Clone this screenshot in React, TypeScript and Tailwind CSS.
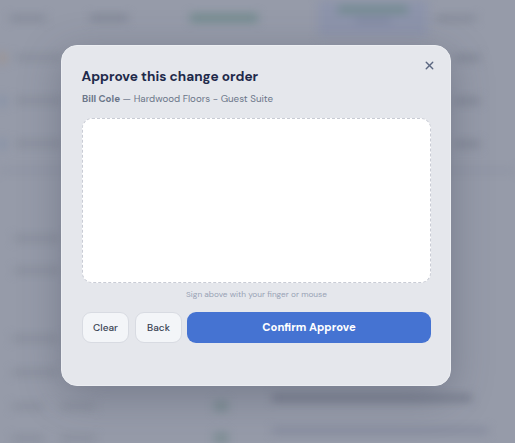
import { X } from 'lucide-react'

const font = "font-['DM_Sans','Inter','Liberation_Sans',sans-serif]"

function Bar({ className }: { className: string }) {
  return <div className={className} />
}

function BackdropPage() {
  return (
    <div className="flex h-full flex-col blur-[5px]">
      {/* top tabs */}
      <div className="flex h-[36px] shrink-0 items-center">
        <Bar className="ml-[10px] h-[5px] w-[36px] bg-[#7f8594]" />
        <Bar className="ml-[44px] h-[6px] w-[38px] bg-[#7f8594]" />
        <Bar className="ml-[62px] h-[8px] w-[68px] bg-[#6f8a8c]" />
        <div className="ml-[60px] flex h-full w-[110px] flex-col items-center bg-[#8d94ab] pt-[6px]">
          <Bar className="h-[7px] w-[70px] bg-[#6f8a8c]" />
          <Bar className="mt-[5px] h-[5px] w-[36px] bg-[#7f87a0]" />
        </div>
        <Bar className="ml-[8px] h-[5px] w-[40px] bg-[#7f8594]" />
      </div>

      {/* rows */}
      {['bg-[#a08f85]', 'bg-[#7d8ca6]', 'bg-[#7d8ca6]'].map((dot, i) => (
        <div key={i} className="flex h-[43px] shrink-0 items-center">
          <Bar className={`h-[10px] w-[5px] ${dot}`} />
          <Bar className="ml-[10px] h-[5px] w-[48px] bg-[#858b99]" />
          <div className="flex-1" />
          <Bar className="mr-[35px] h-[6px] w-[26px] bg-[#7f8594]" />
        </div>
      ))}
      <Bar className="mt-[4px] h-[3px] w-full shrink-0 bg-[#8a90a0]" />

      {/* lower lists */}
      <div className="mt-[64px] flex flex-col gap-[27px] pl-[14px]">
        <Bar className="h-[5px] w-[46px] bg-[#858b99]" />
        <Bar className="h-[5px] w-[46px] bg-[#858b99]" />
      </div>
      <div className="mt-[63px] flex flex-col gap-[29px] pl-[12px]">
        <Bar className="h-[5px] w-[46px] bg-[#858b99]" />
        <Bar className="h-[5px] w-[46px] bg-[#858b99]" />
      </div>
      <div className="mt-[26px] flex items-start">
        <div className="flex w-[272px] flex-col gap-[22px] pl-[12px]">
          <div className="flex items-center">
            <Bar className="h-[5px] w-[32px] bg-[#858b99]" />
            <Bar className="ml-[16px] h-[5px] w-[36px] bg-[#858b99]" />
            <Bar className="ml-[118px] h-[10px] w-[14px] bg-[#7a8c92]" />
          </div>
          <div className="flex items-center">
            <Bar className="h-[5px] w-[32px] bg-[#858b99]" />
            <Bar className="ml-[16px] h-[5px] w-[36px] bg-[#858b99]" />
            <Bar className="ml-[118px] h-[10px] w-[14px] bg-[#7a8c92]" />
          </div>
        </div>
        <div className="-mt-[6px] flex flex-col gap-[27px]">
          <Bar className="h-[6px] w-[200px] bg-[#717788]" />
          <Bar className="h-[5px] w-[216px] bg-[#80869a]" />
        </div>
      </div>
    </div>
  )
}

export default function App() {
  return (
    <div className={`relative h-[443px] w-[515px] overflow-hidden bg-[#969ba9] ${font}`}>
      <BackdropPage />

      {/* modal */}
      <div className="absolute inset-0 flex items-start justify-center pr-[3px] pt-[45px]">
        <div className="relative h-[341px] w-[390px] rounded-[16px] border border-[#eceef2] bg-[#e5e7ec] pl-[20px] pr-[19px] pt-[22px] shadow-[0_10px_40px_rgba(60,66,85,0.35)]">
          <button className="absolute right-[14px] top-[13px] text-[#5b6780]">
            <X size={13} strokeWidth={2.5} />
          </button>
          <h2 className="-ml-[0.5px] text-[13.6px] font-bold leading-[18px] text-[#1e2a4a]">Approve this change order</h2>
          <p className="mt-[6px] text-[9.75px] leading-[14px] text-[#6b7689]">
            <span className="font-bold">Bill Cole</span> — Hardwood Floors - Guest Suite
          </p>
          <div className="mt-[12px] h-[165px] rounded-[10px] border border-dashed border-[#c9ccd5] bg-white" />
          <p className="mt-[6px] text-center text-[8.25px] leading-[12px] text-[#98a2b5]">
            Sign above with your finger or mouse
          </p>
          <div className="mt-[11px] flex gap-[6px]">
            <button className="h-[31px] w-[47px] rounded-[9px] border border-[#d8dbe2] bg-[#f3f5f8] text-[10px] font-medium text-[#374151]">
              Clear
            </button>
            <button className="h-[31px] w-[47px] rounded-[9px] border border-[#d8dbe2] bg-[#f3f5f8] text-[10px] font-medium text-[#374151]">
              Back
            </button>
            <button className="-ml-[1px] h-[31px] flex-1 rounded-[9px] bg-[#4573d2] text-[11.2px] font-extrabold text-white">
              Confirm Approve
            </button>
          </div>
        </div>
      </div>
    </div>
  )
}
